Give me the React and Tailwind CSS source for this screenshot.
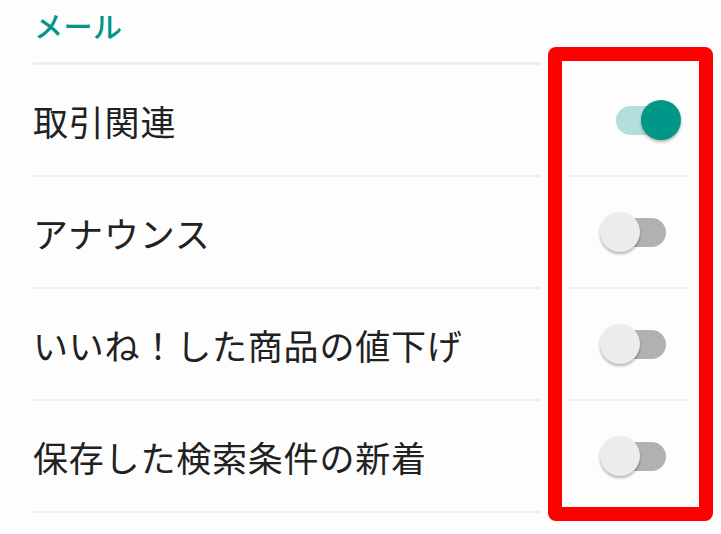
import React from 'react'

const rows = [
  { label: '取引関連', on: true },
  { label: 'アナウンス', on: false },
  { label: 'いいね！した商品の値下げ', on: false },
  { label: '保存した検索条件の新着', on: false },
]

function Toggle({ on }) {
  return (
    <div className={'relative w-[50px] h-[29px] rounded-full ' + (on ? 'bg-[#b2dfdb]' : 'bg-[#b1b1b1]')}>
      <div
        className={
          'absolute top-[-6px] w-[40px] h-[40px] rounded-full shadow-[0_2px_3px_rgba(0,0,0,0.3)] ' +
          (on ? 'left-[25px] bg-[#009688]' : 'left-[-16px] bg-[#ececec]')
        }
      />
    </div>
  )
}

export default function App() {
  return (
    <div className="relative w-[721px] h-[534px] overflow-hidden bg-[#fdfdfd]" style={{ fontFamily: '"Noto Sans CJK JP", "Noto Sans", sans-serif' }}>
      <div className="pl-[33px]">
        <div className="h-[62px] flex items-start pt-[5px] pl-[1px]">
          <span className="text-[29px] leading-[40px] font-medium text-[#009688] tracking-[0.5px]">メール</span>
        </div>
        <div className="w-[508px] h-[3px] bg-[#eeeeee]" />
        {rows.map((r, i) => (
          <div key={i} className="flex h-[112px]">
            <div className="w-[508px] border-b-2 border-[#eeeeee] flex items-center">
              <span className="text-[35px] leading-none text-[#212121] tracking-[0.8px]">{r.label}</span>
            </div>
            <div className="ml-[29px] w-[118px] border-b-2 border-[#eeeeee] flex items-center pl-[46px]">
              <Toggle on={r.on} />
            </div>
          </div>
        ))}
      </div>
      <div className="absolute left-[548px] top-[47px] w-[165px] h-[474px] border-[14px] border-[#ff0000] rounded-[8px]" />
    </div>
  )
}
